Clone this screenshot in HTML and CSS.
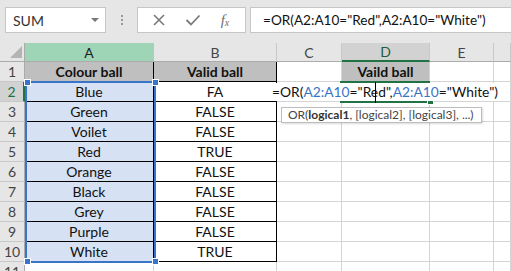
FILE: index.html
```html
<!DOCTYPE html>
<html lang="en">
<head>
    <meta charset="UTF-8">
    <title>OR formula</title>
    <link rel="stylesheet" href="styles.css">
</head>
<body>
    <div class="toolbar">
        <div class="namebox">
            <span>SUM</span>
            <span class="caret"></span>
        </div>
        <div class="grip"><i></i><i></i><i></i></div>
        <div class="fxbox">
            <svg width="14" height="14" viewBox="0 0 14 14"><path d="M2 2 L12 12 M12 2 L2 12" stroke="#7a7a7a" stroke-width="1.6" fill="none"/></svg>
            <svg width="16" height="14" viewBox="0 0 16 14"><path d="M1.5 7 L6 11.5 L14.5 2.5" stroke="#7a7a7a" stroke-width="1.8" fill="none"/></svg>
            <span class="fx">f<sub>x</sub></span>
        </div>
        <div class="formula">=OR(A2:A10="Red",A2:A10="White")</div>
    </div>

    <div class="sheet">
        <div class="corner"><span></span></div>
        <div class="colhead in-sel">A</div>
        <div class="colhead">B</div>
        <div class="colhead">C</div>
        <div class="colhead active">D</div>
        <div class="colhead">E</div>
        <div class="colhead"></div>

        <div class="rowhead">1</div>
        <div class="cell tb title">Colour ball</div>
        <div class="cell tb title">Valid ball</div>
        <div class="cell"></div>
        <div class="cell title d1">Vaild ball</div>
        <div class="cell"></div>
        <div class="cell"></div>

        <div class="rowhead active">2</div>
        <div class="cell tb sel">Blue</div>
        <div class="cell tb">FA</div>
        <div class="cell"></div><div class="cell"></div><div class="cell"></div><div class="cell"></div>

        <div class="rowhead">3</div>
        <div class="cell tb sel">Green</div>
        <div class="cell tb">FALSE</div>
        <div class="cell"></div><div class="cell"></div><div class="cell"></div><div class="cell"></div>

        <div class="rowhead">4</div>
        <div class="cell tb sel">Voilet</div>
        <div class="cell tb">FALSE</div>
        <div class="cell"></div><div class="cell"></div><div class="cell"></div><div class="cell"></div>

        <div class="rowhead">5</div>
        <div class="cell tb sel">Red</div>
        <div class="cell tb">TRUE</div>
        <div class="cell"></div><div class="cell"></div><div class="cell"></div><div class="cell"></div>

        <div class="rowhead">6</div>
        <div class="cell tb sel">Orange</div>
        <div class="cell tb">FALSE</div>
        <div class="cell"></div><div class="cell"></div><div class="cell"></div><div class="cell"></div>

        <div class="rowhead">7</div>
        <div class="cell tb sel">Black</div>
        <div class="cell tb">FALSE</div>
        <div class="cell"></div><div class="cell"></div><div class="cell"></div><div class="cell"></div>

        <div class="rowhead">8</div>
        <div class="cell tb sel">Grey</div>
        <div class="cell tb">FALSE</div>
        <div class="cell"></div><div class="cell"></div><div class="cell"></div><div class="cell"></div>

        <div class="rowhead">9</div>
        <div class="cell tb sel">Purple</div>
        <div class="cell tb">FALSE</div>
        <div class="cell"></div><div class="cell"></div><div class="cell"></div><div class="cell"></div>

        <div class="rowhead">10</div>
        <div class="cell tb sel">White</div>
        <div class="cell tb">TRUE</div>
        <div class="cell"></div><div class="cell"></div><div class="cell"></div><div class="cell"></div>

        <div class="rowhead">11</div>
        <div class="cell"></div><div class="cell"></div><div class="cell"></div><div class="cell"></div><div class="cell"></div><div class="cell"></div>

        <!-- selected range A2:A10 -->
        <div class="range">
            <span class="handle tl"></span>
            <span class="handle tr"></span>
            <span class="handle bl"></span>
            <span class="handle br"></span>
        </div>

        <!-- active cell D2 in edit mode -->
        <div class="active-cell"><span class="fill"></span></div>
        <div class="editor">=OR(<span class="ref">A2:A10</span>="Red",<span class="ref">A2:A10</span>="White")</div>
        <div class="caret-line"></div>
        <div class="tip">OR(<b>logical1</b>, [logical2], [logical3], ...)</div>
    </div>
</body>
</html>
```

FILE: styles.css
```css
body {
    margin: 0;
    width: 511px;
    height: 271px;
    overflow: hidden;
    background-color: #e6e6e6;
    font-family: Lato, "Liberation Sans", sans-serif;
    color: #222;
}

.toolbar {
    display: flex;
    align-items: flex-start;
    height: 43px;
    padding-top: 7px;
    box-sizing: border-box;
}

.namebox {
    display: flex;
    align-items: center;
    justify-content: space-between;
    width: 101px;
    height: 26px;
    margin-left: 5px;
    padding: 0 6px 0 7px;
    box-sizing: border-box;
    background: white;
    border: 1px solid #c6c6c6;
    font-size: 14px;
    color: #333;
}

.caret {
    width: 0;
    height: 0;
    border-left: 4px solid transparent;
    border-right: 4px solid transparent;
    border-top: 4px solid #777;
}

.grip {
    display: flex;
    flex-direction: column;
    gap: 2px;
    width: 31px;
    padding-top: 8px;
    align-items: center;
}

.grip i {
    width: 2px;
    height: 2px;
    background: #9a9a9a;
}

.fxbox {
    display: flex;
    align-items: center;
    justify-content: space-around;
    width: 109px;
    height: 26px;
    padding: 0 6px 0 4px;
    box-sizing: border-box;
    background: white;
    border: 1px solid #c6c6c6;
}

.fx {
    font-family: "Liberation Serif", serif;
    font-style: italic;
    font-size: 15px;
    color: #6e6e6e;
}

.fx sub {
    font-size: 10px;
    vertical-align: -1px;
}

.formula {
    flex: 1;
    height: 26px;
    margin-left: 4px;
    padding-left: 12px;
    box-sizing: border-box;
    background: white;
    border: 1px solid #c6c6c6;
    border-right: none;
    font-size: 13.6px;
    line-height: 24px;
    color: #111;
}

.sheet {
    position: relative;
    display: grid;
    grid-template-columns: 25px 129px 123px 65px 88px 64px 1fr;
    grid-template-rows: 19px repeat(11, 20px);
    background: white;
}

.corner {
    position: relative;
    background: #e6e6e6;
    border-right: 1px solid #ababab;
    border-bottom: 1px solid #ababab;
}

.corner span {
    position: absolute;
    right: 2px;
    bottom: 3px;
    width: 0;
    height: 0;
    border-left: 12px solid transparent;
    border-bottom: 12px solid #b4b4b4;
}

.colhead {
    display: flex;
    align-items: center;
    justify-content: center;
    background: #e6e6e6;
    border-right: 1px solid #c8c8c8;
    border-bottom: 1px solid #ababab;
    font-size: 14px;
    color: #444;
}

.colhead.in-sel {
    background: #9fd5b7;
    color: #1d1d1d;
    border-right-color: #9fd5b7;
}

.colhead.active {
    background: #d2d2d2;
    color: #1e5c3a;
    border-bottom: 2px solid #217346;
}

.rowhead {
    display: flex;
    align-items: center;
    justify-content: center;
    background: #e6e6e6;
    border-right: 1px solid #ababab;
    border-bottom: 1px solid #c8c8c8;
    font-size: 14px;
    color: #444;
}

.rowhead.active {
    background: #d2d2d2;
    color: #217346;
    border-right: 2px solid #217346;
}

.cell {
    display: flex;
    align-items: center;
    justify-content: center;
    border-right: 1px solid #d4d4d4;
    border-bottom: 1px solid #d4d4d4;
    font-size: 14px;
    color: #111;
}

.cell.tb {
    border-right-color: #000;
    border-bottom-color: #000;
}

.cell.title {
    background: #bfbfbf;
    font-weight: bold;
}

.cell.d1 {
    border-right-color: #d4d4d4;
}

.cell.sel {
    background: #d6e2f3;
}

.range {
    position: absolute;
    left: 25px;
    top: 38px;
    width: 131px;
    height: 182px;
    box-sizing: border-box;
    border: 2px solid #3a74c8;
}

.handle {
    position: absolute;
    width: 5px;
    height: 5px;
    background: #3a74c8;
    border: 1px solid white;
}

.handle.tl { left: -3px; top: -4px; }
.handle.tr { right: -5px; top: -4px; }
.handle.bl { left: -3px; bottom: -4px; }
.handle.br { right: -5px; bottom: -4px; }

.active-cell {
    position: absolute;
    left: 340px;
    top: 38px;
    width: 90px;
    height: 22px;
    box-sizing: border-box;
    border-top: 2px solid #217346;
    border-bottom: 2px solid #217346;
}

.active-cell .fill {
    position: absolute;
    right: -4px;
    bottom: -4px;
    width: 5px;
    height: 5px;
    background: #217346;
    border: 1px solid white;
}

.editor {
    position: absolute;
    left: 271px;
    top: 40px;
    width: 228px;
    height: 18px;
    background: white;
    text-align: center;
    font-size: 13.8px;
    line-height: 18px;
    color: #111;
}

.editor .ref {
    color: #3a74c8;
}

.caret-line {
    position: absolute;
    left: 375px;
    top: 39px;
    width: 1px;
    height: 21px;
    background: #000;
}

.tip {
    position: absolute;
    left: 281px;
    top: 64px;
    width: 201px;
    height: 16px;
    box-sizing: border-box;
    padding-left: 6px;
    background: white;
    border: 1px solid #bdbdbd;
    box-shadow: 1px 1px 2px rgba(0,0,0,0.15);
    font-size: 12px;
    line-height: 14px;
    color: #444;
    white-space: nowrap;
}

.tip b {
    color: #333;
}
```
